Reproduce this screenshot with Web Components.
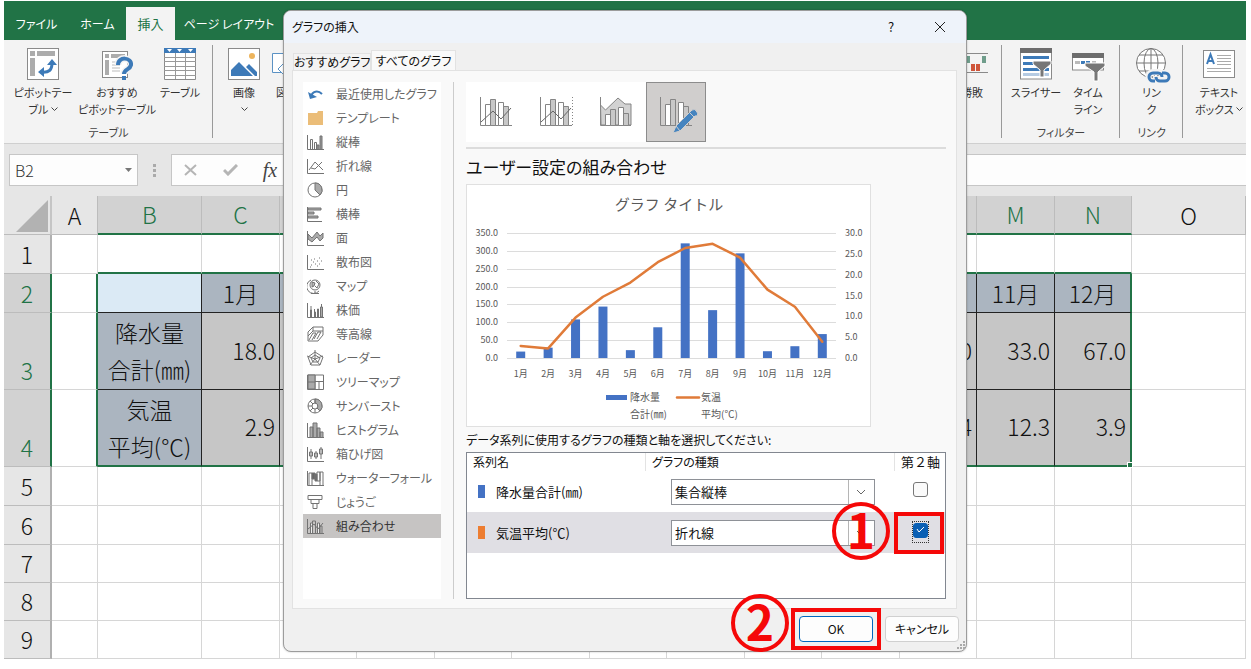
<!DOCTYPE html>
<html lang="ja">
<head>
<meta charset="utf-8">
<title>グラフの挿入</title>
<style>
html, body { margin: 0; background: #fff; }
body { font-family: "Noto Sans CJK JP", "Noto Sans", sans-serif; font-size: 12px; color: #222; overflow: hidden; }
</style>
</head>
<body>
<excel-app></excel-app>
<script>
const define = (name, html, setup) => {
  const template = document.createElement('template');
  template.innerHTML = html;
  customElements.define(name, class extends HTMLElement {
    connectedCallback() {
      if (this.shadowRoot) return;
      const root = this.attachShadow({ mode: 'open' });
      root.append(template.content.cloneNode(true));
      if (setup) setup(root, this);
    }
  });
};

/* Ribbon icons, drawn on a 32 x 32 field */
const ribbonIcons = {
  pivot: `<rect x=".5" y=".5" width="31" height="31" fill="#fff" stroke="#8a8a8a"/><path d="M3 3h5v5H3zM10 3h18v5H10zM3 10h5v18H3z" fill="#acacac"/><path d="M14 24c8 1 11-2 11-9" fill="none" stroke="#3d7ab8" stroke-width="3"/><path d="M25 11l-5 6h10zM11 24l6-5v10z" fill="#3d7ab8"/>`,
  recommend: `<rect x="1.500" y="3.500" width="25" height="26" fill="#fff" stroke="#8a8a8a"/><path d="M4 6h4v4H4zM10 6h14v4H10zM4 12h4v15H4z" fill="#acacac"/><path d="M11 14h8M11 17h8M11 20h8M11 23h8" stroke="#bbb"/><path d="M17 17c0-9 14-8 13 0-1 5-7 4-7 9" fill="none" stroke="#f3f3f3" stroke-width="7"/><path d="M17 17c0-9 14-8 13 0-1 5-7 4-7 9" fill="none" stroke="#3d7ab8" stroke-width="4"/><path d="M21 28h4v4h-4z" fill="#3d7ab8"/>`,
  table: `<path d="M.5 4.500h31v27H.5z" fill="#fff" stroke="#8a8a8a"/><path d="M0 0h32v5H0z" fill="#3d7ab8"/><path d="M3 1h5l-2.500 3zM13 1h5l-2.500 3zM24 1h5l-2.500 3z" fill="#fff"/><path d="M11.500 5v26M21.500 5v26M0 9.500h32M0 13.500h32M0 18.500h32M0 22.500h32M0 27.500h32" stroke="#999"/>`,
  image: `<rect x=".5" y=".5" width="31" height="31" fill="#fff" stroke="#8a8a8a"/><circle cx="24" cy="8" r="3" fill="#edb45c"/><path d="M3 28v-6l8-8 14 14zM18 19l3-3 8 8v4h-2z" fill="#3d7ab8"/>`,
  shapes: `<path d="M1.500 5.500h20v19h-20z" fill="#fff" stroke="#5b92c4"/><path d="M14 14l7 7-7 7-7-7z" fill="#fff" stroke="#5b92c4"/>`,
  winloss: `<path d="M0 5.500h32M0 24.500h32" stroke="#8a8a8a"/><path d="M4 8h4v7H4zM10 8h4v7h-4zM26 8h4v7h-4z" fill="#6f9d8b"/><path d="M15 16h4v7h-4zM20 16h4v7h-4z" fill="#cf553a"/>`,
  slicer: `<rect x=".5" y="1" width="31" height="30" fill="#fff" stroke="#8a8a8a"/><path d="M0 0h32v5H0z" fill="#6d6d6d"/><path d="M3 8h26v3H3zM3 14h26v3H3zM3 20h26v3H3z" fill="#3d7ab8"/><path d="M3 25h26v3H3z" fill="#b5cbe3"/><path d="M13 13h18v3l-7 6v7h-4v-7l-7-6z" fill="#777" stroke="#fff"/>`,
  timeline: `<rect x=".5" y="6" width="31" height="16" fill="#fff" stroke="#8a8a8a"/><path d="M0 5h32v5H0z" fill="#6d6d6d"/><path d="M3 13h5v3H3zM20 13h4v3h-4z" fill="#bbb"/><path d="M9 13h4v3H9zM14 13h4v3h-4z" fill="#3d7ab8"/><path d="M13 15h20v3l-7 6v9h-4v-9l-9-6z" fill="#777" stroke="#fff"/>`,
  link: `<g fill="#fff" stroke="#777"><circle cx="15" cy="15" r="14.500"/><ellipse cx="15" cy="15" rx="7" ry="14.500" fill="none"/><path d="M.5 15h29M15 0v30M3 7h24M3 23h24" fill="none"/></g><g fill="none"><path d="M20 33h-3a4 4 0 0 1 0-9h5a4 4 0 0 1 4 5M24 25h5a4 4 0 0 1 0 8h-5a4 4 0 0 1-4-5" stroke="#f3f3f3" stroke-width="6"/><path d="M19 33h-2a4 4 0 0 1 0-8h5a4 4 0 0 1 4 4M26 25h3a4 4 0 0 1 0 8h-5a4 4 0 0 1-4-4" stroke="#3d7ab8" stroke-width="3"/></g>`,
  textbox: `<rect x=".5" y="2.500" width="31" height="27" fill="#fff" stroke="#8a8a8a"/><path d="M4 16L7.500 6.500L11 16M5 13h5" fill="none" stroke="#3d7ab8" stroke-width="2"/><path d="M14 7.500h14M14 10.500h14M14 13.500h14M14 16.500h14M4 20.500h24M4 23.500h24" stroke="#aaa"/>`
};

define('ribbon-tabs', `<style>
:host { display: flex; height: 39px; background: #217346; }
button { font: inherit; font-feature-settings: "palt"; border: 0; padding: 0; margin: 6px 0 0; background: none; color: #fff; line-height: 32px; white-space: nowrap; }
.file { width: 65px; } .home { width: 57px; } .layout { width: 108px; }
.on { width: 49px; background: #f3f3f3; color: #217346; font-size: 13px; }
</style><button class="file">ファイル</button><button class="home">ホーム</button><button class="on">挿入</button><button class="layout">ページ レイアウト</button>`);

define('ribbon-button', `<style>
:host { display: block; }
button { width: 100%; border: 0; padding: 0; background: none; font: inherit; color: #333; font-feature-settings: "palt"; display: flex; flex-direction: column; align-items: center; gap: 4px; line-height: 17px; white-space: nowrap; }
svg { display: block; width: 32px; height: 32px; overflow: visible; }
span { height: 34px; }
</style><button><svg viewBox="0 0 32 32" aria-hidden="true"></svg><span><slot></slot></span></button>`,
(root, host) => root.querySelector('svg').innerHTML = ribbonIcons[host.getAttribute('icon')]);

define('ribbon-group', `<style>
:host { display: block; box-sizing: border-box; padding: 8px 3px 2px; position: relative; font-size: 11px; }
:host([divided])::after { content: ""; position: absolute; right: 0; top: 5px; bottom: 5px; width: 1px; background: #999; }
.items { display: flex; justify-content: center; }
:host([start]) .items { justify-content: flex-start; }
p { margin: 6px 0 0; height: 17px; line-height: 17px; text-align: center; font-feature-settings: "palt"; color: #444; }
</style><div class="items"><slot></slot></div><p></p>`,
(root, host) => root.querySelector('p').textContent = host.getAttribute('label') || '');

define('excel-ribbon', `<style>
:host { display: flex; justify-content: space-between; background: #f3f3f3; border-bottom: 1px solid #cfcfcf; overflow: hidden; }
.side { display: flex; }
.w30 { width: 30px; } .w44 { width: 44px; } .w50 { width: 50px; } .w54 { width: 54px; } .w56 { width: 56px; } .w72 { width: 72px; } .w76 { width: 76px; }
.tables { width: 209px; } .spark { width: 60px; } .filter { width: 118px; } .links { width: 63px; } .text { width: 63px; padding-left: 9px; padding-right: 0; }
.chev { display: inline-block; width: 7px; height: 5px; fill: none; stroke: #444; vertical-align: 2px; }
</style>
<div class="side">
<ribbon-group class="tables" label="テーブル" divided start>
<ribbon-button class="w72" icon="pivot">ピボットテー<br>ブル <svg class="chev" viewBox="0 0 7 5"><path d="M.5 .5l3 3 3-3"/></svg></ribbon-button>
<ribbon-button class="w76" icon="recommend">おすすめ<br>ピボットテーブル</ribbon-button>
<ribbon-button class="w50" icon="table">テーブル</ribbon-button>
</ribbon-group>
<ribbon-group start>
<ribbon-button class="w56" icon="image">画像<br><svg class="chev" viewBox="0 0 7 5"><path d="M.5 .5l3 3 3-3"/></svg></ribbon-button>
<ribbon-button class="w30" icon="shapes">図形</ribbon-button>
</ribbon-group>
</div>
<div class="side">
<ribbon-group class="spark" divided><ribbon-button class="w44" icon="winloss">勝敗</ribbon-button></ribbon-group>
<ribbon-group class="filter" label="フィルター" divided>
<ribbon-button class="w54" icon="slicer">スライサー</ribbon-button>
<ribbon-button class="w50" icon="timeline">タイム<br>ライン</ribbon-button>
</ribbon-group>
<ribbon-group class="links" label="リンク" divided><ribbon-button class="w44" icon="link">リン<br>ク</ribbon-button></ribbon-group>
<ribbon-group class="text"><ribbon-button class="w54" icon="textbox">テキスト<br>ボックス <svg class="chev" viewBox="0 0 7 5"><path d="M.5 .5l3 3 3-3"/></svg></ribbon-button></ribbon-group>
</div>`);

define('formula-bar', `<style>
:host { display: flex; background: #e6e6e6; padding: 10px 0 10px 5px; height: 32px; }
.name, .entry { box-sizing: border-box; background: #fdfdfd; border: 1px solid #c6c6c6; display: flex; align-items: center; }
.name { width: 129px; padding: 0 5px; }
input { border: 0; padding: 0; background: none; font: inherit; font-size: 16px; font-weight: 300; color: #333; min-width: 0; flex: 1; outline: 0; }
.dots { width: 33px; display: grid; place-items: center; }
.entry { flex: 1; border-right: 0; padding-left: 10px; gap: 24px; }
button { border: 0; background: none; padding: 0; width: 16px; height: 20px; display: grid; place-items: center; overflow: visible; }
.fx { font: italic 20px/20px "Liberation Serif", serif; color: #444; }
svg { display: block; }
</style>
<div class="name"><input aria-label="名前ボックス" value="B2"><svg width="7" height="4"><path d="M0 0h7L3.500 4z" fill="#777"/></svg></div>
<div class="dots"><svg width="3" height="13"><path d="M0 0h3v3H0zM0 5h3v3H0zM0 10h3v3H0z" fill="#aaa"/></svg></div>
<div class="entry">
<button aria-label="キャンセル"><svg width="13" height="12"><path d="M1 1l11 10M12 1L1 11" stroke="#b5b5b5" stroke-width="2"/></svg></button>
<button aria-label="入力"><svg width="15" height="12"><path d="M1 6l4 4 9-9" fill="none" stroke="#b5b5b5" stroke-width="3"/></svg></button>
<button class="fx" aria-label="関数の挿入">fx</button>
<input aria-label="数式">
</div>`);

define('sheet-grid', `<style>
:host { display: block; font-weight: 300; }
table { width: 100%; table-layout: fixed; border-collapse: separate; border-spacing: 0; font-size: 23px; line-height: 36px; color: #111; }
th, td { box-sizing: border-box; padding: 0; border: 0 solid #d6d6d6; border-width: 0 1px 1px 0; font-weight: 300; height: 39px; overflow: hidden; }
tr.two > * { height: 77px; }
tr.two td.head { line-height: 37px; }
tr.low > * { height: 38px; }
td.num { padding-bottom: 3px; }
th { background: #e6e6e6; border-color: #bcbcbc; }
thead th { line-height: 35px; }
tbody th { vertical-align: bottom; line-height: 34px; padding-bottom: 2px; border-right: 2px solid #b0b0b0; }
th.on { background: #d2d2d2; color: #217346; }
thead th.on { border-bottom: 2px solid #217346; }
tbody th.on { border-right: 2px solid #217346; }
thead th.corner { vertical-align: bottom; border-right: 2px solid #c5c5c5; }
.corner svg { display: block; margin: 0 2px 2px auto; }
.seltop { border-bottom: 2px solid #217346; }
.selleft { border-right: 2px solid #217346; }
.head { background: #abb5c0; border-color: #222; text-align: center; }
.num { background: #c6c6c6; border-color: #222; text-align: right; padding-right: 4px; }
.active { background: #dbeaf5; border-color: #222; }
td.last { border-right: 2px solid #217346; }
tr.end td.in { border-bottom: 2px solid #217346; }
td.handle { position: relative; overflow: visible; }
td.handle::after { content: ""; position: absolute; right: -3px; bottom: -3px; width: 4px; height: 4px; border: 1px solid #fff; background: #217346; }
.c0 { width: 48px; } .c1 { width: 46px; } .c2 { width: 104px; } .c3 { width: 78px; } .c4 { width: 77px; } .c5 { width: 114px; }
</style><table></table>`,
(root) => {
  const cols = 'ABCDEFGHIJKLMNO'.split('');
  const shown = 'ABCMNO';
  const widths = { A: 'c1', B: 'c2', C: 'c3', M: 'c3', N: 'c4', O: 'c5' };
  const values = {
    C2: '1月', M2: '11月', N2: '12月', B3: '降水量<br>合計(㎜)', C3: '18.0', L3: '19.0', M3: '33.0', N3: '67.0',
    B4: '気温<br>平均(℃)', C4: '2.9', L4: '16.4', M4: '12.3', N4: '3.9'
  };
  let html = '<colgroup><col class="c0">' + cols.map(c => `<col class="${widths[c] || ''}">`).join('') + '</colgroup>';
  html += '<thead><tr><th class="corner"><svg width="32" height="32"><path d="M32 0v32H0z" fill="#b2b2b2"/></svg></th>'
    + cols.map(c => `<th class="${c > 'A' && c < 'O' ? 'on' : ''}">${shown.includes(c) ? c : ''}</th>`).join('') + '</tr></thead><tbody>';
  for (let r = 1; r <= 9; r++) {
    const sel = r > 1 && r < 5;
    html += `<tr class="${r === 3 || r === 4 ? 'two' : ''} ${r === 4 ? 'end' : ''} ${r > 6 ? 'low' : ''}"><th class="${sel ? 'on' : ''}">${r}</th>`;
    for (const c of cols) {
      const inside = c > 'A' && c < 'O';
      const cls = [];
      if (r === 1 && inside) cls.push('seltop');
      if (sel && c === 'A') cls.push('selleft');
      if (sel && inside) {
        cls.push('in', c === 'B' && r === 2 ? 'active' : c === 'B' || r === 2 ? 'head' : 'num');
        if (c === 'N') cls.push('last');
        if (c === 'N' && r === 4) cls.push('handle');
      }
      html += `<td class="${cls.join(' ')}">${values[c + r] || ''}</td>`;
    }
    html += '</tr>';
  }
  root.querySelector('table').innerHTML = html + '</tbody>';
});

/* Chart type icons, drawn on a 17 x 16 field */
const axis = '<path d="M.5 1v14.500H17"/>';
const typeIcons = [
  ['最近使用したグラフ', '<path d="M4 11C5 5 11 4 15 8" stroke="#3d7ab8" stroke-width="2"/><path d="M1 6l2 7 7-2z" fill="#3d7ab8" stroke="none"/>'],
  ['テンプレート', '<path d="M1 3h9l1-2h5v14H1z" fill="#ebbd78" stroke="none"/>'],
  ['縦棒', axis + '<path d="M3.500 15V5.500h2V15M7.500 15V8.500h2V15"/><path d="M10 15v-4h2v4M13 15V2h2v13" fill="#999"/>'],
  ['折れ線', axis + '<path d="M2 12l6-8 8 8M4 10l4 1 7-7"/>'],
  ['円', '<circle cx="8" cy="8" r="7"/><path d="M8 8V1a7 7 0 0 1 5 12z" fill="#aaa"/>'],
  ['横棒', '<path d="M.5 1v14.500H15"/><path d="M1 2h13v2H1zM1 6h6v2H1zM1 10h10v2H1z" fill="#aaa"/>'],
  ['面', axis + '<path d="M1 4l4 4 5-6 3 4 3-3v5l-3 3-3-4-5 5-4-3z" fill="#aaa"/>'],
  ['散布図', axis + '<path d="M4 11h1M6 8h1M8 10h1M7 5h1M10 7h1M12 4h1M12 10h1M14 7h1M3 13h1M10 12h1M4 6h1"/>'],
  ['マップ', '<circle cx="8" cy="7" r="5"/><path d="M5 4l3 1-1 3-2 1z" fill="#bbb"/><path d="M9 3l3 3-2 4-2-2M4 2a7 7 0 1 0 8 11M8 13v2M4 15.500h8"/>'],
  ['株価', axis + '<path d="M4 4v11M7.500 7v8M14.500 2v13"/><path d="M3.500 8h1v7h-1zM7.500 10h1v5h-1zM10.500 7h1v8h-1zM13.500 5h2v10h-2z" fill="#aaa"/>'],
  ['等高線', '<path d="M1 6l5-5h10v8l-5 6H1zM1 10l5-5h10M6 1v4M2 14l4-7h3l-4 7M7 13l4-7h3l-4 7"/>'],
  ['レーダー', '<path d="M8 0v9M8 9L0 6M8 9l8-3M8 9l-5 6M8 9l5 6M8 2L1 7l3 8h9l3-8zM8 5L4 8l2 4h5l2-4z"/>'],
  ['ツリーマップ', '<path d="M.5 1h16v14.500H.5zM8 1v14M8 7.500h8M12 7v8"/><path d="M1 1h7v14H1z" fill="#aaa"/><path d="M1 8h7"/>'],
  ['サンバースト', '<circle cx="8" cy="8" r="7"/><circle cx="8" cy="8" r="3"/><path d="M8 1a7 7 0 0 1 5 12l-3-3a3 3 0 0 0-2-5z" fill="#aaa"/><path d="M1 8h4M3 13l3-3M8 1v4M3 3l3 3M8 11v4"/>'],
  ['ヒストグラム', axis + '<path d="M3 15V5h3v10M6 15V1h4v14M10 15V6h3v9M13 15v-5h3v5" fill="#aaa"/>'],
  ['箱ひげ図', axis + '<path d="M4 3v10M9 5v8M14 1v12M2.500 6h3v4h-3zM7.500 7h3v4h-3zM12.500 3h3v5h-3z"/>'],
  ['ウォーターフォール', axis + '<path d="M2 15V3h3v12M13 15V2h3v13"/><path d="M5 3h3v6H5zM8 4h2v7H8z" fill="#666"/><path d="M10 2h3v9h-3z"/>'],
  ['じょうご', '<path d="M1 1.500h14v4H1zM4 5.500h8v4H4zM6 9.500h4v5H6z"/>'],
  ['組み合わせ', axis + '<path d="M3.500 15V5h2v10M10.500 15V5h2v10" fill="#eee"/><path d="M5.500 15V3h3v12M13 15V8h2v7"/><path d="M1 11l6-5 4 5 5-6"/>']
];
define('chart-type-list', `<style>
:host { display: block; background: #fff; }
button { display: flex; align-items: center; gap: 12px; width: 100%; height: 24px; padding: 0 0 0 4px; border: 0; background: none; font: inherit; color: #666; line-height: 24px; white-space: nowrap; font-feature-settings: "palt"; text-align: left; }
button.on { background: #c6c4c3; color: #333; }
svg { width: 17px; height: 16px; fill: none; stroke: #737373; flex: none; }
</style><nav></nav>`,
(root) => root.querySelector('nav').innerHTML = typeIcons.map(([name, art], i) =>
  `<button class="${i === 18 ? 'on' : ''}"><svg viewBox="0 0 17 16">${art}</svg>${name}</button>`).join(''));

const columns = '<path d="M.5 0v28.500H32" fill="none"/><path d="M5.500 7.500h5v21h-5z" fill="#fff"/><path d="M10.500 2.500h5v26h-5z" fill="#c8c8c8"/><path d="M18.500 5.500h5v23h-5z" fill="#fff"/><path d="M23.500 9.500h5v19h-5z" fill="#c8c8c8"/>';
define('combo-subtypes', `<style>
:host { display: flex; border-bottom: 2px solid #dcdcdc; padding-bottom: 5px; }
button { box-sizing: border-box; width: 60px; height: 60px; padding: 0; border: 0; background: #fff; display: grid; place-items: center; }
button.on { background: #d0cecd; border: 1px solid #8c8c8c; }
svg { width: 36px; height: 36px; stroke: #858585; overflow: visible; }
</style>
<button aria-label="集合縦棒 - 折れ線"><svg viewBox="-2 -3 36 36">${columns}<path d="M1 25L13 14l8 8L31 11" fill="none" stroke="#666"/></svg></button>
<button aria-label="集合縦棒 - 第 2 軸の折れ線"><svg viewBox="-2 -3 36 36">${columns}<path d="M1 25L13 14l8 8L31 11" fill="none" stroke="#666"/><path d="M32.500 0v28" stroke-dasharray="1 2"/></svg></button>
<button aria-label="積み上げ面 - 集合縦棒"><svg viewBox="-2 -3 36 36"><path d="M.5 0v28.500H31" fill="none"/><path d="M.5 8l5 5L18 1l7 6h6v21H1z" fill="#d2d2d2"/><path d="M5.500 17.500h5v11h-5zM18.500 10.500h5v18h-5z" fill="#fff"/><path d="M10.500 12.500h5v16h-5zM23.500 16.500h5v12h-5z" fill="#c8c8c8"/></svg></button>
<button class="on" aria-label="ユーザー設定の組み合わせ"><svg viewBox="-2 -3 36 36">${columns}<path d="M13 36l3-7L32 13q3-2 5 2t-2 4L20 34z" fill="#4584bf" stroke="#d0cecd"/><path d="M29 15l5 5M16 29l4 5" stroke="#d0cecd"/></svg></button>`);

define('combo-preview', `<style>
:host { display: block; box-sizing: border-box; width: 405px; background: #fff; border: 1px solid #e0e0e0; }
svg { display: block; width: 100%; height: auto; }
text { font-family: inherit; font-size: 9px; fill: #595959; }
.title { font-size: 15px; } .legend { font-size: 10px; }
</style><svg viewBox="0 0 403 241" role="img" aria-label="降水量と気温のグラフ"></svg>`,
(root) => {
  const rain = [18, 29, 108, 144, 22, 86, 321, 134, 293, 19, 33, 67];
  const temp = [2.9, 2.3, 9.7, 14.7, 18.1, 23, 26.4, 27.4, 24.1, 16.4, 12.3, 3.9];
  const left = 40, width = 329, base = 173, height = 125;
  const x = i => left + (i + .5) * width / 12;
  let out = '<text class="title" x="202" y="25" text-anchor="middle">グラフ タイトル</text>';
  for (let i = 0; i <= 7; i++) {
    const y = base - i * height / 7;
    out += `<path d="M${left} ${Math.round(y)}.5h${width}" stroke="#dcdcdc"/><text x="31" y="${y + 3}" text-anchor="end">${i * 50}.0</text>`;
  }
  for (let i = 0; i <= 6; i++) out += `<text x="378" y="${base + 3 - i * height / 6}">${i * 5}.0</text>`;
  rain.forEach((v, i) => {
    const h = v * height / 350;
    out += `<rect x="${x(i) - 4.5}" y="${base - h}" width="9" height="${h}" fill="#4472c4"/><text x="${x(i)}" y="192" text-anchor="middle">${i + 1}月</text>`;
  });
  out += `<polyline points="${temp.map((v, i) => x(i) + ',' + (base - v * height / 30)).join(' ')}" fill="none" stroke="#e07b39" stroke-width="2.500" stroke-linejoin="round" stroke-linecap="round"/>`;
  out += '<path d="M139 210h21v5h-21z" fill="#4472c4"/><path d="M210 212.500h22" stroke="#e07b39" stroke-width="2.500" stroke-linecap="round"/>';
  out += '<g><text class="legend" x="163" y="216">降水量</text><text class="legend" x="163" y="233">合計(㎜)</text><text class="legend" x="234" y="216">気温</text><text class="legend" x="234" y="233">平均(℃)</text></g>';
  root.querySelector('svg').innerHTML = out;
});

define('step-mark', `<style>
:host { display: block; box-sizing: border-box; width: 58px; height: 58px; border: 4px solid #f50808; border-radius: 50%; color: #f50808; font-size: 48px; font-weight: 700; line-height: 44px; text-align: center; pointer-events: none; }
</style><slot></slot>`);

define('type-select', `<style>
:host { display: block; position: relative; }
select { appearance: none; display: block; box-sizing: border-box; width: 100%; height: 26px; padding: 0 30px 0 3px; border: 1px solid #8e9197; border-radius: 0; background: #fff; font: inherit; font-size: 13px; line-height: 22px; color: #111; font-feature-settings: "palt"; }
svg { position: absolute; right: 1px; top: 1px; width: 26px; height: 24px; fill: none; stroke: #666; pointer-events: none; }
</style><select><option></option></select><svg viewBox="0 0 26 24"><path d="M.5 0v24" stroke="#b5b5b5"/><path d="M9 10l4 4 4-4"/></svg>`,
(root, host) => {
  root.querySelector('option').textContent = host.getAttribute('value');
  root.querySelector('select').setAttribute('aria-label', host.getAttribute('label'));
});

define('series-table', `<style>
:host { display: block; box-sizing: border-box; height: 147px; border: 1px solid #828790; background: #fff; }
table { width: 100%; table-layout: fixed; border-spacing: 0; font-size: 13px; color: #111; }
th, td { padding: 0; text-align: left; font-weight: 400; white-space: nowrap; }
th { height: 18px; line-height: 18px; font-size: 12px; font-feature-settings: "palt"; padding-left: 6px; border-right: 1px solid #e3e3e3; }
th:last-child { border: 0; font-size: 13px; font-feature-settings: normal; }
td { height: 41px; }
tr.on td { background: #e0dfe4; }
.name { width: 179px; } .axis { width: 50px; }
.series { display: flex; align-items: center; gap: 11px; padding-left: 11px; }
i { width: 7px; height: 13px; background: #4472c4; }
.on i { background: #ed7d31; }
type-select { margin: 0 20px 0 25px; }
.check { position: relative; padding-left: 18px; }
input { appearance: none; display: block; box-sizing: border-box; width: 15px; height: 15px; margin: -4px 0 0; border: 1px solid #777; border-radius: 3px; background: #fafafa; }
input:checked { background: #0a5fb4; border-color: #0a5fb4; }
.check svg { position: absolute; left: 21px; top: 14px; fill: none; stroke: #fff; }
.focus { position: absolute; left: 17px; top: 9px; width: 15px; height: 20px; border: 1px dotted #333; }
.mark { position: absolute; left: -1px; top: 0; right: 1px; height: 42px; box-sizing: border-box; border: 4px solid #f50808; }
step-mark { position: absolute; right: 55px; top: -10px; }
</style>
<table>
<colgroup><col class="name"><col><col class="axis"></colgroup>
<thead><tr><th>系列名</th><th>グラフの種類</th><th>第２軸</th></tr></thead>
<tbody>
<tr><td><span class="series"><i></i>降水量合計(㎜)</span></td><td><type-select value="集合縦棒" label="降水量合計のグラフの種類"></type-select></td><td class="check"><input type="checkbox" aria-label="降水量合計の第 2 軸"></td></tr>
<tr class="on"><td><span class="series"><i></i>気温平均(℃)</span></td><td><type-select value="折れ線" label="気温平均のグラフの種類"></type-select></td><td class="check"><input type="checkbox" checked aria-label="気温平均の第 2 軸"><svg width="9" height="7"><path d="M1 3l2 3 5-5"/></svg><span class="focus"></span><span class="mark"></span><step-mark>1</step-mark></td></tr>
</tbody></table>`);

define('chart-dialog', `<style>
:host { display: block; box-sizing: border-box; background: #f0f0f0; border: 1px solid #9c9c9c; border-radius: 8px; box-shadow: 0 0 2px #0004; }
header { display: flex; align-items: center; height: 32px; padding: 0 18px 0 8px; background: #eef3fa; color: #111; border-radius: 7px 7px 0 0; }
h1 { flex: 1; margin: 0; font-size: 12px; font-weight: 400; line-height: 28px; font-feature-settings: "palt"; }
header button { border: 0; background: none; padding: 0; width: 16px; font: inherit; font-size: 13px; line-height: 28px; color: #111; }
header button + button { margin-left: 33px; }
svg { display: block; margin: auto; }
.tabs { display: flex; align-items: flex-end; height: 27px; padding-left: 9px; }
.tabs button { box-sizing: border-box; height: 17px; width: 78px; padding: 0; border: 1px solid #e2e2e2; border-bottom: 0; background: #f3f3f3; font: inherit; line-height: 16px; color: #111; font-feature-settings: "palt"; white-space: nowrap; }
.tabs button.on { height: 20px; width: 85px; background: #f9f9f9; }
.panel { margin: 0 9px 0 8px; border: 1px solid #e2e2e2; background: #f9f9f9; display: flex; padding: 11px 10px 9px; }
chart-type-list { width: 138px; }
.rule { width: 1px; background: #ccc; margin: 0 12px; }
main { flex: 1; min-width: 0; }
h2 { margin: 0; font-size: 17px; line-height: 35px; font-weight: 400; color: #111; font-feature-settings: "palt"; }
.hint { margin: 3px 0 0; line-height: 20px; font-size: 12px; color: #111; white-space: nowrap; font-feature-settings: "palt"; }
series-table { margin-top: 2px; }
footer { display: flex; justify-content: flex-end; align-items: center; padding: 7px 7px 9px 0; position: relative; }
footer button { box-sizing: border-box; width: 74px; height: 26px; padding: 0; border: 1px solid #d0d0d0; border-radius: 4px; background: #fdfdfd; font: inherit; line-height: 22px; color: #111; font-feature-settings: "palt"; }
.ok { position: relative; margin-right: 12px; }
.ok button { display: block; border-color: #0067c0; }
.mark { position: absolute; inset: -8px; border: 4px solid #f50808; pointer-events: none; }
step-mark { position: absolute; right: 84px; top: -22px; }
.grip { position: absolute; right: 0; bottom: 1px; }
</style>
<header><h1>グラフの挿入</h1><button aria-label="ヘルプ">?</button><button aria-label="閉じる"><svg width="12" height="12"><path d="M1 1l10 10M11 1L1 11" stroke="#222"/></svg></button></header>
<div class="tabs"><button>おすすめグラフ</button><button class="on">すべてのグラフ</button></div>
<div class="panel">
<chart-type-list></chart-type-list><div class="rule"></div>
<main><combo-subtypes></combo-subtypes><h2>ユーザー設定の組み合わせ</h2><combo-preview></combo-preview>
<p class="hint">データ系列に使用するグラフの種類と軸を選択してください:</p><series-table></series-table></main>
</div>
<footer><div class="ok"><button>OK</button><span class="mark"></span><step-mark>2</step-mark></div><button>キャンセル</button><svg class="grip" width="10" height="10"><path d="M7 1h2v2H7zM4 4h2v2H4zM7 4h2v2H7zM1 7h2v2H1zM4 7h2v2H4zM7 7h2v2H7z" fill="#aaa"/></svg></footer>`);

define('excel-app', `<style>
:host { display: block; position: relative; margin: 1px 5px 0 4px; }
chart-dialog { position: absolute; left: 279px; right: 279px; top: 9px; }
</style>
<ribbon-tabs></ribbon-tabs><excel-ribbon></excel-ribbon><formula-bar></formula-bar><sheet-grid></sheet-grid><chart-dialog></chart-dialog>`);
</script>
</body>
</html>
